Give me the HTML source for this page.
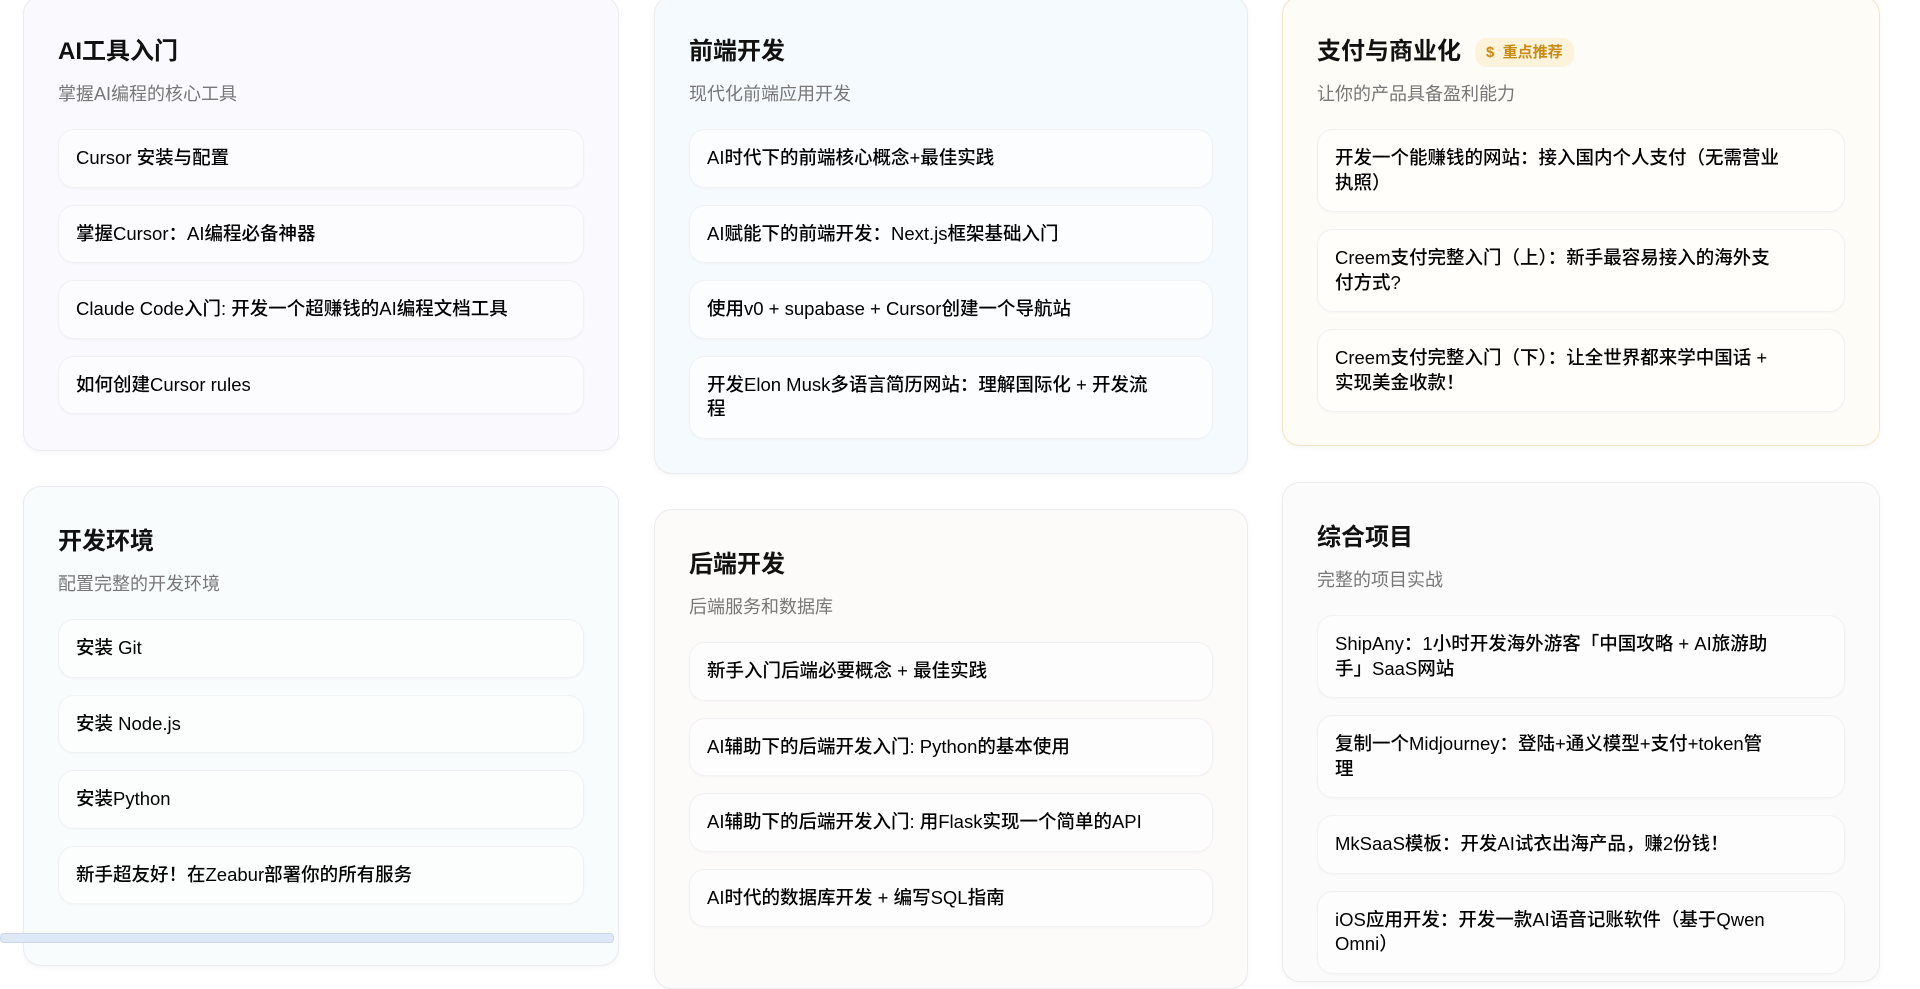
<!DOCTYPE html>
<html><head><meta charset="utf-8"><style>
*{box-sizing:border-box;margin:0;padding:0}
body{width:1920px;height:940px;overflow:hidden;background:#fff;font-family:"Liberation Sans","Noto Sans CJK SC",sans-serif;position:relative}
.card{position:absolute;border:1px solid #ebebf0;border-radius:18px;padding:0 34px;box-shadow:0 2px 6px rgba(0,0,0,.04)}
.t{margin-top:37px;font-size:24px;font-weight:bold;color:#111;height:36px;line-height:36px;display:flex;align-items:center}
.s{margin-top:12px;font-size:18px;color:#777;line-height:24px}
.list{margin-top:23px}
.it{background:rgba(255,255,255,.55);border:1px solid #f1f1f4;border-radius:16px;padding:16px 17px;font-size:18.5px;font-weight:500;line-height:24.5px;color:#000;margin-bottom:17px;box-shadow:0 1px 2px rgba(0,0,0,.03)}
.badge{margin-left:14px;background:#fdf2da;color:#c98a12;font-size:15px;font-weight:bold;border-radius:12px;height:29px;line-height:29px;padding:0 11px}
</style></head><body>

<div class="card" style="left:23px;top:-4px;width:596px;height:455px;background:#f9f9fe">
<div class="t">AI工具入门</div><div class="s">掌握AI编程的核心工具</div>
<div class="list">
<div class="it">Cursor 安装与配置</div>
<div class="it">掌握Cursor：AI编程必备神器</div>
<div class="it">Claude Code入门: 开发一个超赚钱的AI编程文档工具</div>
<div class="it">如何创建Cursor rules</div>
</div></div>

<div class="card" style="left:654px;top:-4px;width:594px;height:478px;background:#f5fafe">
<div class="t">前端开发</div><div class="s">现代化前端应用开发</div>
<div class="list">
<div class="it">AI时代下的前端核心概念+最佳实践</div>
<div class="it">AI赋能下的前端开发：Next.js框架基础入门</div>
<div class="it">使用v0 + supabase + Cursor创建一个导航站</div>
<div class="it">开发Elon Musk多语言简历网站：理解国际化 + 开发流<br>程</div>
</div></div>

<div class="card" style="left:1282px;top:-4px;width:598px;height:450px;background:#fefcf6;border-color:#f1e6c8">
<div class="t">支付与商业化<span class="badge">$&nbsp; 重点推荐</span></div><div class="s">让你的产品具备盈利能力</div>
<div class="list">
<div class="it">开发一个能赚钱的网站：接入国内个人支付（无需营业<br>执照）</div>
<div class="it">Creem支付完整入门（上）：新手最容易接入的海外支<br>付方式?</div>
<div class="it">Creem支付完整入门（下）：让全世界都来学中国话 +<br>实现美金收款！</div>
</div></div>

<div class="card" style="left:23px;top:486px;width:596px;height:480px;background:#f8fcfc">
<div class="t">开发环境</div><div class="s">配置完整的开发环境</div>
<div class="list">
<div class="it">安装 Git</div>
<div class="it">安装 Node.js</div>
<div class="it">安装Python</div>
<div class="it">新手超友好！在Zeabur部署你的所有服务</div>
</div></div>

<div class="card" style="left:654px;top:509px;width:594px;height:480px;background:#fdfbfa">
<div class="t">后端开发</div><div class="s">后端服务和数据库</div>
<div class="list">
<div class="it">新手入门后端必要概念 + 最佳实践</div>
<div class="it">AI辅助下的后端开发入门: Python的基本使用</div>
<div class="it">AI辅助下的后端开发入门: 用Flask实现一个简单的API</div>
<div class="it">AI时代的数据库开发 + 编写SQL指南</div>
</div></div>

<div class="card" style="left:1282px;top:482px;width:598px;height:500px;background:#fcfbfb">
<div class="t">综合项目</div><div class="s">完整的项目实战</div>
<div class="list">
<div class="it">ShipAny：1小时开发海外游客「中国攻略 + AI旅游助<br>手」SaaS网站</div>
<div class="it">复制一个Midjourney：登陆+通义模型+支付+token管<br>理</div>
<div class="it">MkSaaS模板：开发AI试衣出海产品，赚2份钱！</div>
<div class="it">iOS应用开发：开发一款AI语音记账软件（基于Qwen<br>Omni）</div>
</div></div>

<div style="position:absolute;left:0;top:933px;width:614px;height:10px;background:#dfe8f6;border:1px solid #c9d6ec;border-radius:4px"></div>
</body></html>
